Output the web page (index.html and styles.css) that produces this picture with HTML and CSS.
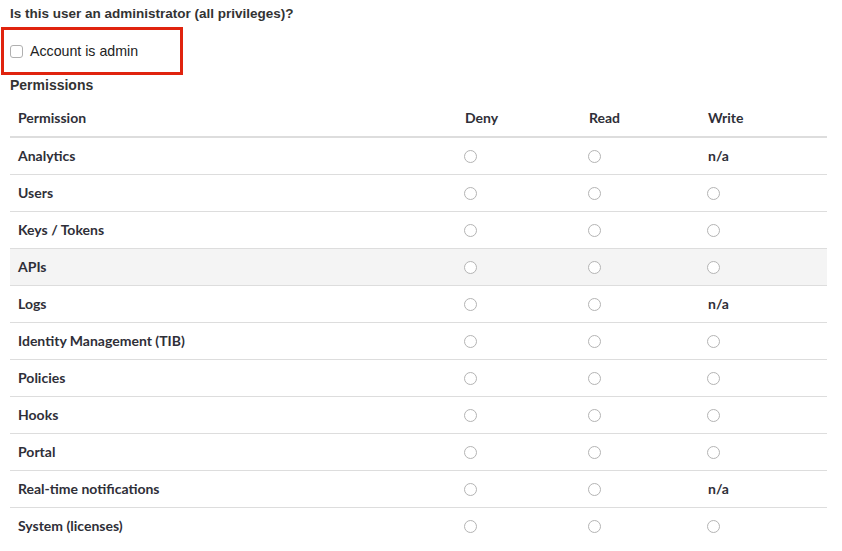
FILE: index.html
```html
<!DOCTYPE html>
<html>
<head>
<meta charset="utf-8">
<link rel="stylesheet" href="styles.css">
</head>
<body>
<div class="page">
  <h4 class="question">Is this user an administrator (all privileges)?</h4>
  <div class="admin-box">
    <label class="admin-label"><input type="checkbox" class="check"> Account is admin</label>
  </div>
  <h4 class="section">Permissions</h4>
  <table class="perm-table">
    <thead>
      <tr><th class="c-name">Permission</th><th class="c-deny">Deny</th><th class="c-read">Read</th><th class="c-write">Write</th></tr>
    </thead>
    <tbody>
      <tr><td>Analytics</td><td><input type="radio" class="radio" name="r1"></td><td><input type="radio" class="radio" name="r1"></td><td>n/a</td></tr>
      <tr><td>Users</td><td><input type="radio" class="radio" name="r2"></td><td><input type="radio" class="radio" name="r2"></td><td><input type="radio" class="radio" name="r2"></td></tr>
      <tr><td>Keys / Tokens</td><td><input type="radio" class="radio" name="r3"></td><td><input type="radio" class="radio" name="r3"></td><td><input type="radio" class="radio" name="r3"></td></tr>
      <tr class="hover"><td>APIs</td><td><input type="radio" class="radio" name="r4"></td><td><input type="radio" class="radio" name="r4"></td><td><input type="radio" class="radio" name="r4"></td></tr>
      <tr><td>Logs</td><td><input type="radio" class="radio" name="r5"></td><td><input type="radio" class="radio" name="r5"></td><td>n/a</td></tr>
      <tr><td>Identity Management (TIB)</td><td><input type="radio" class="radio" name="r6"></td><td><input type="radio" class="radio" name="r6"></td><td><input type="radio" class="radio" name="r6"></td></tr>
      <tr><td>Policies</td><td><input type="radio" class="radio" name="r7"></td><td><input type="radio" class="radio" name="r7"></td><td><input type="radio" class="radio" name="r7"></td></tr>
      <tr><td>Hooks</td><td><input type="radio" class="radio" name="r8"></td><td><input type="radio" class="radio" name="r8"></td><td><input type="radio" class="radio" name="r8"></td></tr>
      <tr><td>Portal</td><td><input type="radio" class="radio" name="r9"></td><td><input type="radio" class="radio" name="r9"></td><td><input type="radio" class="radio" name="r9"></td></tr>
      <tr><td>Real-time notifications</td><td><input type="radio" class="radio" name="r10"></td><td><input type="radio" class="radio" name="r10"></td><td>n/a</td></tr>
      <tr><td>System (licenses)</td><td><input type="radio" class="radio" name="r11"></td><td><input type="radio" class="radio" name="r11"></td><td><input type="radio" class="radio" name="r11"></td></tr>
    </tbody>
  </table>
</div>
</body>
</html>
```
FILE: styles.css
```css
html, body {
  margin: 0;
  padding: 0;
  background: #fff;
}
.page {
  padding: 4px 15px 0 10px;
  font-family: "Liberation Sans", Arial, sans-serif;
  color: #333;
}
.question {
  margin: 0;
  font-size: 13.5px;
  line-height: 20px;
  font-weight: bold;
}
.admin-box {
  margin: 3px 0 0 -9px;
  width: 170px;
  height: 42px;
  border: 3px solid #e0230e;
  display: flex;
  align-items: center;
  padding-left: 6px;
}
.admin-label {
  display: flex;
  align-items: center;
  font-size: 14.2px;
  line-height: 20px;
  color: #222;
}
.check {
  appearance: none;
  -webkit-appearance: none;
  width: 13px;
  height: 13px;
  margin: 0 7px 0 0;
  border: 1px solid #b0b0b0;
  border-radius: 3px;
  background: #fff;
}
.section {
  margin: 0;
  font-size: 14px;
  line-height: 20px;
  font-weight: bold;
}
.perm-table {
  margin-top: 5px;
  width: 817px;
  border-collapse: collapse;
  font-family: Lato, "Open Sans", sans-serif;
  font-size: 14px;
  font-weight: bold;
  color: #2f2f38;
}
.perm-table th, .perm-table td {
  text-align: left;
  padding: 8px;
  line-height: 20px;
  height: 20px;
  vertical-align: middle;
}
.perm-table th {
  border-bottom: 2px solid #ddd;
}
.perm-table td {
  border-bottom: 1px solid #ddd;
}
.perm-table tbody tr:last-child td {
  border-bottom: none;
}
.c-name { width: 431px; }
.c-deny { width: 108px; }
.c-read { width: 103px; }
.c-write { width: 111px; }
.hover td {
  background: #f4f4f4;
}
.radio {
  appearance: none;
  -webkit-appearance: none;
  width: 13px;
  height: 13px;
  margin: 0 0 0 -1px;
  border: 1px solid #b4b4b4;
  border-radius: 50%;
  background: #fff;
  display: block;
}
```
